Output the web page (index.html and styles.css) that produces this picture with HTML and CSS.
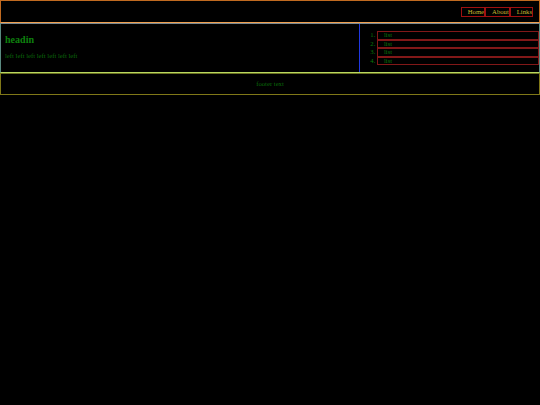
FILE: index.html
```html
<!DOCTYPE html>
<html>
<head>
<meta charset="utf-8">
<title>Layout</title>
<link rel="stylesheet" href="styles.css">
</head>
<body>
<header class="site-header">
  <nav>
    <ul class="nav">
      <li class="nav-item">Home</li>
      <li class="nav-item">About</li>
      <li class="nav-item">Links</li>
    </ul>
  </nav>
</header>
<main class="main">
  <section class="content">
    <h2 class="heading">headin</h2>
    <p class="text">left left left left left left left</p>
  </section>
  <aside class="side">
    <ol class="list">
      <li class="list-item">list</li>
      <li class="list-item">list</li>
      <li class="list-item">list</li>
      <li class="list-item">list</li>
    </ol>
  </aside>
</main>
<footer class="site-footer">
  <p class="footer-text">footer text</p>
</footer>
</body>
</html>
```
FILE: styles.css
```css
html, body {
  margin: 0;
  padding: 0;
  background: #000;
}
body {
  font-family: "Liberation Serif", "Times New Roman", serif;
  font-size: 6.7px;
  line-height: 1;
  color: #0a7a0a;
}
.site-header {
  border: 1px solid #c06a20;
  border-bottom-color: #f0a050;
  padding: 6px 6px 5.5px 6px;
}
.nav {
  list-style: none;
  margin: 0;
  padding: 0;
  display: flex;
  justify-content: flex-end;
}
.nav-item {
  border: 1px solid #a01010;
  padding: 0 0 0 6px;
  line-height: 7.5px;
  color: #c8b830;
}
.main {
  display: grid;
  grid-template-columns: 358px 1fr;
  border: 1px solid #5a8a80;
  border-top-color: #7a8890;
  border-bottom-color: #b8d860;
}
.content {
  padding: 1.5px 4px 0;
}
.heading {
  font-size: 1.5em;
  line-height: normal;
  margin: 0.83em 0;
  color: #0e800e;
}
.text {
  margin: 1.15em 0 1em;
  color: #0a6a0a;
}
.side {
  border-left: 1px solid #2038e0;
}
.list {
  margin: 7px 0 6.5px;
  padding-left: 17px;
  color: #0a7a0a;
}
.list-item {
  border: 1px solid #821818;
  padding-left: 6px;
  line-height: 6.6px;
}
.site-footer {
  border: 1px solid #807818;
  border-top-color: #6a7020;
  text-align: center;
}
.footer-text {
  margin: 6.7px 0 6.3px;
  color: #0a6a0a;
}
```
